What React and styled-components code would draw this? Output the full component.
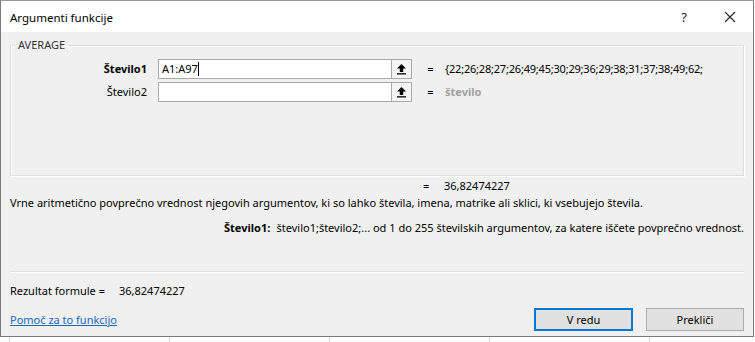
import React from "react";
import styled, { createGlobalStyle } from "styled-components";

const GlobalStyle = createGlobalStyle`
    html, body {
        margin: 0;
        padding: 0;
        background: #ffffff;
    }
    body {
        font-family: "Noto Sans", "Open Sans", sans-serif;
        font-size: 11px;
        line-height: 16px;
        color: #000;
    }
`;

const Page = styled.div`
    width: 755px;
    height: 342px;
    overflow: hidden;
    background-color: #fff;
    background-image: repeating-linear-gradient(
        90deg,
        transparent 0,
        transparent 9px,
        #d4d4d4 9px,
        #d4d4d4 10px,
        transparent 10px,
        transparent 160px
    );
`;

const Window = styled.div`
    width: 752px;
    height: 335px;
    border: 1px solid #7a7a7a;
    border-top-color: #9a9a9a;
    background: #f0f0f0;
    display: flex;
    flex-direction: column;
    overflow: hidden;
`;

const TitleBar = styled.div`
    flex-shrink: 0;
    height: 31px;
    background: #fff;
    display: flex;
    align-items: center;
    padding-left: 9px;
`;

const Title = styled.div`
    flex: 1;
    font-size: 11.5px;
    padding-top: 2px;
`;

const TitleButton = styled.div`
    width: 46px;
    height: 31px;
    display: flex;
    align-items: center;
    justify-content: center;
    font-size: ${(p) => p.size}px;
    color: #222;
`;

const Body = styled.div`
    flex: 1;
    display: flex;
    flex-direction: column;
    padding: 5px 9px 0 8px;
`;

const Group = styled.fieldset`
    box-sizing: border-box;
    margin: 0 0 0 1px;
    padding: 5px 0 0 0;
    height: 139px;
    border: 1px solid #dcdcdc;
    box-shadow: inset 1px 1px 0 #fff, 1px 1px 0 #fff;
    min-width: 0;
`;

const Legend = styled.legend`
    margin-left: 4px;
    padding: 0 3px;
    color: #333;
`;

const ArgRow = styled.div`
    display: grid;
    grid-template-columns: 147px 233px 21px 33px 258px;
    align-items: center;
    height: 22px;
    margin-bottom: 1px;
`;

const ArgLabel = styled.div`
    text-align: right;
    padding-right: 11px;
    font-weight: ${(p) => (p.bold ? 700 : 400)};
`;

const ArgInput = styled.div`
    height: 18px;
    background: #fff;
    border: 1px solid #a9a9a9;
    border-right: none;
    display: flex;
    align-items: center;
    padding-left: 3px;
`;

const Caret = styled.span`
    display: inline-block;
    width: 1px;
    height: 14px;
    background: #000;
`;

const RefButton = styled.div`
    height: 18px;
    border: 1px solid #a9a9a9;
    background: #f4f4f4;
    display: flex;
    align-items: center;
    justify-content: center;
`;

const Eq = styled.div`
    text-align: center;
    padding-left: 4px;
`;

const ArgValue = styled.div`
    white-space: nowrap;
    overflow: hidden;
    letter-spacing: ${(p) => (p.muted ? 0 : -0.2)}px;
    color: ${(p) => (p.muted ? "#a0a0a0" : "#000")};
    font-weight: ${(p) => (p.muted ? 700 : 400)};
`;

const ResultLine = styled.div`
    display: flex;
    margin-top: 2px;
    padding-left: 414px;
`;

const ResultEq = styled.span`
    width: 21px;
`;

const Description = styled.div`
    margin-top: 1px;
    padding-left: 1px;
    white-space: nowrap;
`;

const ArgHelp = styled.div`
    display: flex;
    margin-top: 9px;
    padding-left: 215px;
    white-space: nowrap;
`;

const ArgHelpName = styled.span`
    font-weight: 700;
    width: 57px;
`;

const Separator = styled.div`
    flex-shrink: 0;
    margin: 35px 0 0 1px;
    height: 1px;
    background: #dcdcdc;
    border-bottom: 1px solid #fff;
`;

const FormulaResult = styled.div`
    margin-top: 10px;
    padding-left: 1px;
    display: flex;
`;

const FormulaLabel = styled.span`
    width: 109px;
`;

const Footer = styled.div`
    display: flex;
    align-items: center;
    margin-top: 9px;
    padding-left: 1px;
`;

const HelpLink = styled.a`
    flex: 1;
    color: #1a66b8;
    text-decoration: underline;
    padding-top: 1px;
`;

const Button = styled.button`
    box-sizing: border-box;
    width: ${(p) => p.w}px;
    height: 23px;
    margin-left: ${(p) => p.gap || 0}px;
    font: inherit;
    color: #000;
    background: #e1e1e1;
    border: ${(p) => (p.primary ? "2px solid #0078d7" : "1px solid #adadad")};
    padding: 0;
`;

const UpArrow = () => (
    <svg width="11" height="12" viewBox="0 0 11 12">
        <path d="M5.5 1 L1 5.5 H3.8 V9 H7.2 V5.5 H10 Z" fill="#000" />
        <rect x="1" y="10.2" width="9" height="1.3" fill="#000" />
    </svg>
);

const CloseIcon = () => (
    <svg width="12" height="12" viewBox="0 0 12 12">
        <path d="M1 1 L11 11 M11 1 L1 11" stroke="#222" strokeWidth="1.1" />
    </svg>
);

const args = [
    {
        name: "Število1",
        bold: true,
        value: "A1:A97",
        result: "{22;26;28;27;26;49;45;30;29;36;29;38;31;37;38;49;62;55;41",
    },
    {name: "Število2", value: "", result: "število", muted: true},
];

const App = () => {
    return (
        <Page>
            <GlobalStyle />
            <Window>
                <TitleBar>
                    <Title>Argumenti funkcije</Title>
                    <TitleButton size={13}>?</TitleButton>
                    <TitleButton>
                        <CloseIcon />
                    </TitleButton>
                </TitleBar>
                <Body>
                    <Group>
                        <Legend>AVERAGE</Legend>
                        {args.map((a) => (
                            <ArgRow key={a.name}>
                                <ArgLabel bold={a.bold}>{a.name}</ArgLabel>
                                <ArgInput>
                                    {a.value}
                                    {a.bold && <Caret />}
                                </ArgInput>
                                <RefButton>
                                    <UpArrow />
                                </RefButton>
                                <Eq>=</Eq>
                                <ArgValue muted={a.muted}>{a.result}</ArgValue>
                            </ArgRow>
                        ))}
                    </Group>
                    <ResultLine>
                        <ResultEq>=</ResultEq>
                        <span>36,82474227</span>
                    </ResultLine>
                    <Description>
                        Vrne aritmetično povprečno vrednost njegovih argumentov, ki so lahko števila, imena, matrike ali sklici, ki vsebujejo števila.
                    </Description>
                    <ArgHelp>
                        <ArgHelpName>Število1:</ArgHelpName>
                        <span>število1;število2;... od 1 do 255 številskih argumentov, za katere iščete povprečno vrednost.</span>
                    </ArgHelp>
                    <Separator />
                    <FormulaResult>
                        <FormulaLabel>Rezultat formule =</FormulaLabel>
                        <span>36,82474227</span>
                    </FormulaResult>
                    <Footer>
                        <HelpLink>Pomoč za to funkcijo</HelpLink>
                        <Button primary w={99}>V redu</Button>
                        <Button w={98} gap={13}>Prekliči</Button>
                    </Footer>
                </Body>
            </Window>
        </Page>
    );
};

export default App;
